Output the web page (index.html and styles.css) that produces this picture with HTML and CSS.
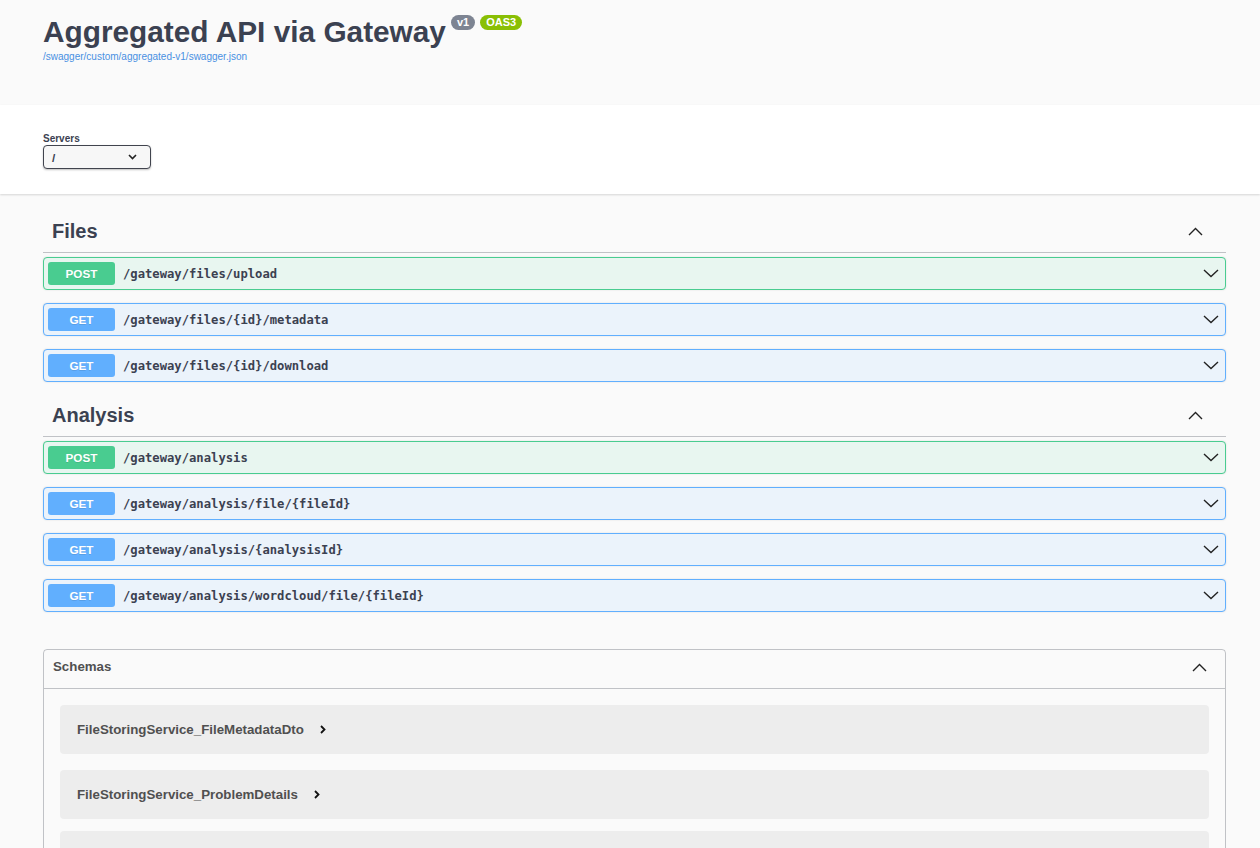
FILE: index.html
```html
<!DOCTYPE html>
<html lang="en">
<head>
<meta charset="utf-8">
<title>Swagger UI</title>
<link rel="stylesheet" href="styles.css">
</head>
<body>
<div class="info">
  <div class="title-row">
    <h2 class="title">Aggregated API via Gateway</h2>
    <span class="badge badge-version">v1</span>
    <span class="badge badge-oas">OAS3</span>
  </div>
  <a class="url" href="#">/swagger/custom/aggregated-v1/swagger.json</a>
</div>

<div class="schemes">
  <div class="servers-label">Servers</div>
  <div class="select">
    <span>/</span>
    <svg class="select-arrow" width="9" height="6" viewBox="0 0 9 6"><polyline points="1,1 4.5,4.5 8,1" fill="none" stroke="#222" stroke-width="1.6"/></svg>
  </div>
</div>

<div class="ops">
  <section class="tag">
    <h3 class="tag-head"><span>Files</span>
      <svg class="chev-up" width="15" height="9" viewBox="0 0 15 9"><polyline points="1,8 7.5,1.5 14,8" fill="none" stroke="#222" stroke-width="1.4"/></svg>
    </h3>
    <div class="opblock post"><span class="method">POST</span><span class="path">/gateway/files/upload</span>
      <svg class="chev-down" width="16" height="9" viewBox="0 0 16 9"><polyline points="1,1 8,7.5 15,1" fill="none" stroke="#222" stroke-width="1.4"/></svg></div>
    <div class="opblock get"><span class="method">GET</span><span class="path">/gateway/files/{id}/metadata</span>
      <svg class="chev-down" width="16" height="9" viewBox="0 0 16 9"><polyline points="1,1 8,7.5 15,1" fill="none" stroke="#222" stroke-width="1.4"/></svg></div>
    <div class="opblock get"><span class="method">GET</span><span class="path">/gateway/files/{id}/download</span>
      <svg class="chev-down" width="16" height="9" viewBox="0 0 16 9"><polyline points="1,1 8,7.5 15,1" fill="none" stroke="#222" stroke-width="1.4"/></svg></div>
  </section>

  <section class="tag">
    <h3 class="tag-head"><span>Analysis</span>
      <svg class="chev-up" width="15" height="9" viewBox="0 0 15 9"><polyline points="1,8 7.5,1.5 14,8" fill="none" stroke="#222" stroke-width="1.4"/></svg>
    </h3>
    <div class="opblock post"><span class="method">POST</span><span class="path">/gateway/analysis</span>
      <svg class="chev-down" width="16" height="9" viewBox="0 0 16 9"><polyline points="1,1 8,7.5 15,1" fill="none" stroke="#222" stroke-width="1.4"/></svg></div>
    <div class="opblock get"><span class="method">GET</span><span class="path">/gateway/analysis/file/{fileId}</span>
      <svg class="chev-down" width="16" height="9" viewBox="0 0 16 9"><polyline points="1,1 8,7.5 15,1" fill="none" stroke="#222" stroke-width="1.4"/></svg></div>
    <div class="opblock get"><span class="method">GET</span><span class="path">/gateway/analysis/{analysisId}</span>
      <svg class="chev-down" width="16" height="9" viewBox="0 0 16 9"><polyline points="1,1 8,7.5 15,1" fill="none" stroke="#222" stroke-width="1.4"/></svg></div>
    <div class="opblock get"><span class="method">GET</span><span class="path">/gateway/analysis/wordcloud/file/{fileId}</span>
      <svg class="chev-down" width="16" height="9" viewBox="0 0 16 9"><polyline points="1,1 8,7.5 15,1" fill="none" stroke="#222" stroke-width="1.4"/></svg></div>
  </section>

  <section class="models">
    <h4 class="models-head"><span>Schemas</span>
      <svg class="chev-up" width="15" height="9" viewBox="0 0 15 9"><polyline points="1,8 7.5,1.5 14,8" fill="none" stroke="#222" stroke-width="1.4"/></svg>
    </h4>
    <div class="models-body">
      <div class="model"><span>FileStoringService_FileMetadataDto</span>
        <svg class="chev-right" width="6" height="9" viewBox="0 0 6 9"><polyline points="1,1 4.5,4.5 1,8" fill="none" stroke="#111" stroke-width="1.8"/></svg></div>
      <div class="model"><span>FileStoringService_ProblemDetails</span>
        <svg class="chev-right" width="6" height="9" viewBox="0 0 6 9"><polyline points="1,1 4.5,4.5 1,8" fill="none" stroke="#111" stroke-width="1.8"/></svg></div>
      <div class="model"></div>
    </div>
  </section>
</div>
</body>
</html>
```

FILE: styles.css
```css
html, body {
  margin: 0;
  padding: 0;
}

body {
  background: #fafafa;
  font-family: "Liberation Sans", Arial, sans-serif;
  color: #3b4151;
}

/* ---------- info ---------- */
.info {
  height: 105px;
  box-sizing: border-box;
  padding: 14px 34px 0 43px;
}

.title-row {
  display: flex;
  align-items: flex-start;
}

.title {
  margin: 0;
  font-size: 29.8px;
  line-height: 36px;
  font-weight: 700;
  color: #3b4151;
}

.badge {
  margin-top: 1px;
  height: 15px;
  line-height: 15px;
  padding: 0 6px;
  border-radius: 8px;
  font-size: 11px;
  font-weight: 700;
  color: #fff;
}

.badge-version {
  margin-left: 5px;
  background: #7d8492;
}

.badge-oas {
  margin-left: 5px;
  background: #89bf04;
}

.url {
  display: block;
  margin-top: 1px;
  font-size: 10px;
  line-height: 12px;
  color: #4990e2;
  text-decoration: none;
}

/* ---------- servers ---------- */
.schemes {
  background: #fff;
  box-shadow: 0 1px 2px 0 rgba(0, 0, 0, 0.15);
  padding: 27px 34px 25px 43px;
}

.servers-label {
  font-size: 10px;
  line-height: 13px;
  font-weight: 700;
}

.select {
  width: 108px;
  height: 24px;
  box-sizing: border-box;
  border: 1.5px solid #41444e;
  border-radius: 4px;
  background: #f7f7f7;
  box-shadow: 0 1px 2px 0 rgba(0, 0, 0, 0.25);
  display: flex;
  align-items: center;
  justify-content: space-between;
  padding: 0 13px 0 8px;
  font-size: 11.7px;
  font-weight: 700;
}

/* ---------- operations ---------- */
.ops {
  padding: 17px 34px 0 43px;
}

.tag-head {
  margin: 0 0 4px;
  height: 41px;
  display: flex;
  align-items: center;
  justify-content: space-between;
  padding: 0 23px 0 9px;
  border-bottom: 1px solid rgba(59, 65, 81, 0.3);
  font-size: 20px;
  font-weight: 700;
  color: #3b4151;
}

.opblock {
  display: flex;
  align-items: center;
  height: 33px;
  box-sizing: border-box;
  border: 1px solid;
  border-radius: 4px;
  margin-bottom: 13px;
  padding: 0 6px 0 4px;
  box-shadow: 0 0 2px rgba(0, 0, 0, 0.12);
}

.opblock.post {
  border-color: #49cc90;
  background: #e8f6f0;
}

.opblock.get {
  border-color: #61affe;
  background: #ebf3fb;
}

.method {
  width: 67px;
  height: 23px;
  line-height: 23px;
  border-radius: 3px;
  text-align: center;
  font-size: 11.7px;
  font-weight: 700;
  color: #fff;
  text-shadow: 0 1px 0 rgba(0, 0, 0, 0.1);
}

.post .method {
  background: #49cc90;
}

.get .method {
  background: #61affe;
}

.path {
  padding-left: 8px;
  font-family: "DejaVu Sans Mono", "Liberation Mono", monospace;
  font-size: 12.2px;
  font-weight: 700;
  color: #3b4151;
}

.chev-down {
  margin-left: auto;
}

/* ---------- schemas ---------- */
.models {
  margin-top: 37px;
  border: 1px solid rgba(59, 65, 81, 0.3);
  border-radius: 4px;
}

.models-head {
  margin: 0;
  display: flex;
  align-items: center;
  justify-content: space-between;
  padding: 9px 18px 13px 9px;
  border-bottom: 1px solid rgba(59, 65, 81, 0.3);
  font-size: 13.3px;
  line-height: 16px;
  font-weight: 700;
  color: #505050;
}

.models-body {
  padding-top: 16px;
}

.model {
  height: 49px;
  margin: 0 16px 12px;
  padding-left: 17px;
  display: flex;
  align-items: center;
  border-radius: 4px;
  background: rgba(0, 0, 0, 0.05);
  font-size: 13.3px;
  font-weight: 700;
  color: #505050;
}

.model:first-child {
  margin-bottom: 16px;
}

.chev-right {
  margin-left: 16px;
}
```
